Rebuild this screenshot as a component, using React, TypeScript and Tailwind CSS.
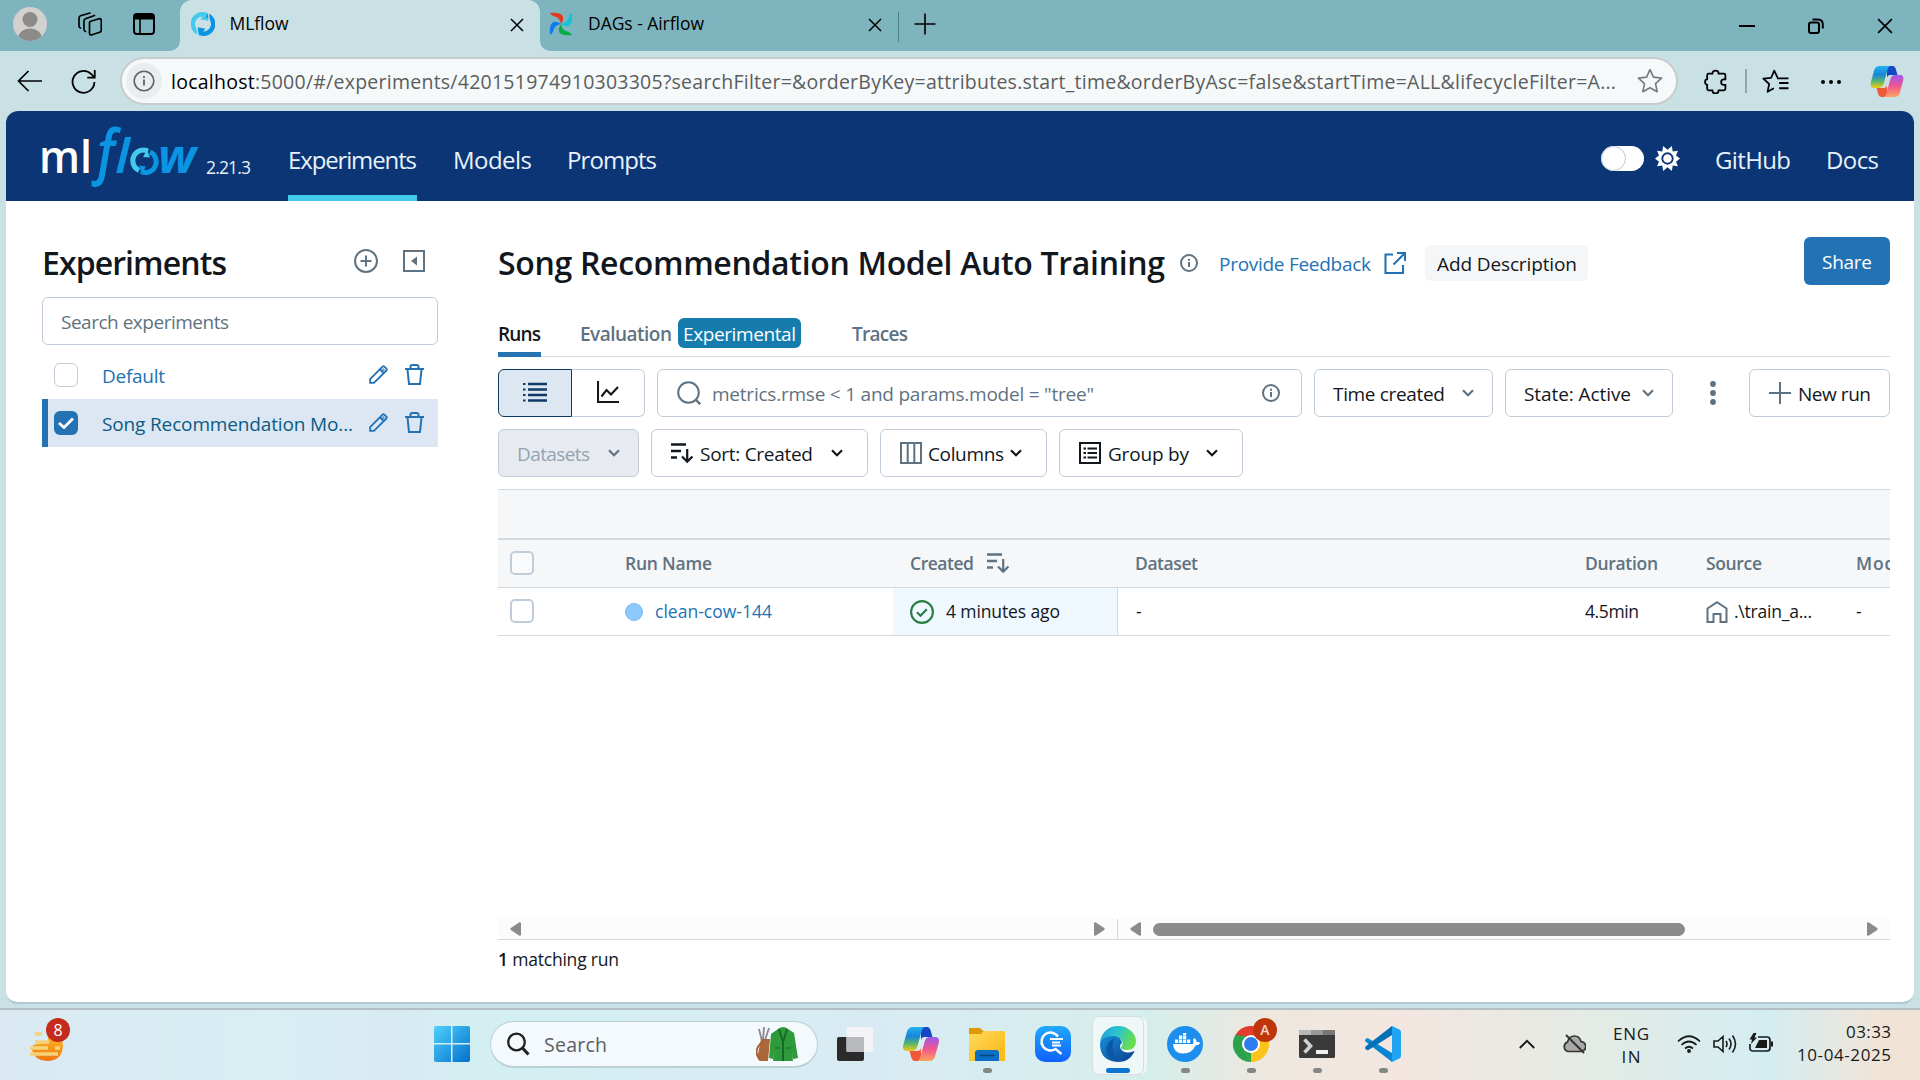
import React, { useLayoutEffect, useRef, useState } from "react";

/**
 * One line of text, tracked so that its glyphs fill the width of its box.
 * A container can set --drop to move the baselines of its texts.
 */
function T({ className = "", children }: { className?: string; children: React.ReactNode }) {
  const outer = useRef<HTMLSpanElement>(null);
  const inner = useRef<HTMLSpanElement>(null);
  const [spacing, setSpacing] = useState(0);
  useLayoutEffect(() => {
    const box = outer.current;
    const text = inner.current;
    if (!box || !text) return;
    const count = Math.max((text.textContent || "").length - 1, 1);
    const natural = text.getBoundingClientRect().width;
    setSpacing((box.clientWidth - natural) / count);
  }, []);
  return (
    <span ref={outer} className={"block shrink-0 whitespace-nowrap pt-[var(--drop,1px)] " + className}>
      <span ref={inner} className="inline-block" style={{ letterSpacing: spacing }}>
        {children}
      </span>
    </span>
  );
}

type IconProps = { className?: string; box?: string; children: React.ReactNode };

function Line({ className = "", box = "0 0 24 24", children }: IconProps) {
  return (
    <svg viewBox={box} className={"block shrink-0 " + className} fill="none" stroke="currentColor" strokeWidth="2">
      {children}
    </svg>
  );
}

const Chevron = ({ className = "" }: { className?: string }) => (
  <Line box="0 0 12 8" className={"h-2 w-3 " + className}>
    <path d="M1 1.2 6 6.2 11 1.2" strokeWidth="2.2" />
  </Line>
);

const Info = ({ className = "" }: { className?: string }) => (
  <Line box="0 0 18 18" className={"size-[18px] text-[#5f7281] " + className}>
    <circle cx="9" cy="9" r="8" />
    <path d="M9 8v5M9 4.8v2" />
  </Line>
);

const Cross = ({ className = "" }: { className?: string }) => (
  <Line box="0 0 14 14" className={className}>
    <path d="M1 1 13 13M13 1 1 13" strokeWidth="1.5" />
  </Line>
);

const SortIcon = ({ className = "" }: { className?: string }) => (
  <Line box="0 0 22 21" className={"h-[21px] w-[22px] " + className}>
    <path d="M0 1.5h15M0 8h10M0 14.5h6" strokeWidth="2.4" />
    <path d="M16.2 6v12M11 13.5l5.2 5.2 5.2-5.2" strokeWidth="2.2" />
  </Line>
);

const Cycle = ({ className = "" }: { className?: string }) => (
  <svg viewBox="0 0 24 24" className={"block shrink-0 " + className} fill="none" strokeWidth="4.4">
    <path d="M8.200 20.800A9.500 9.500 0 0 1 14.500 2.800" stroke="#43c9ed" />
    <path d="M15.500 0 17.200 8.800 9.500 7.200z" fill="#43c9ed" />
    <path d="M15.800 3.200A9.500 9.500 0 0 1 9.500 21.200" stroke="#0a94e2" />
    <path d="M8.500 24 6.800 15.200 14.500 16.800z" fill="#0a94e2" />
    <path d="M17.200 0 18.400 9.600" stroke="#c9e0e4" strokeWidth="1.200" />
    <path d="M6.800 24 5.600 14.400" stroke="#c9e0e4" strokeWidth="1.200" />
  </svg>
);

const Copilot = ({ className = "" }: { className?: string }) => (
  <svg viewBox="0 0 36 34" className={"block shrink-0 " + className}>
    <defs>
      <linearGradient id="cpA" x1="0" y1="0" x2="0" y2="1">
        <stop offset="0" stopColor="#22b3ee" />
        <stop offset=".4" stopColor="#1786d8" />
        <stop offset=".7" stopColor="#5cb568" />
        <stop offset="1" stopColor="#f2cc16" />
      </linearGradient>
      <linearGradient id="cpB" x1="0" y1="0" x2="0" y2="1">
        <stop offset="0" stopColor="#9b58ee" />
        <stop offset=".5" stopColor="#f0568f" />
        <stop offset="1" stopColor="#ffa45c" />
      </linearGradient>
    </defs>
    <path d="M18 0h6c2 0 3 1.500 3.500 3l2 7h-8c-2 0-3 1-3.500 3z" fill="#1347c4" />
    <path d="M18 34h-6c-2 0-3-1.500-3.500-3l-2-7h8c2 0 3-1 3.500-3z" fill="#f0583a" />
    <path d="M10 0h12c-2 .5-2.800 2-3.500 4.500L14.500 19c-1 3.600-2.500 5-5.500 5H4c-4 0-4.500-3-3.600-6.500L4 4.500C5 1.500 7 0 10 0z" fill="url(#cpA)" />
    <path d="M26 34H14c2-.5 2.800-2 3.500-4.500L21.500 15c1-3.600 2.500-5 5.500-5h5c4 0 4.500 3 3.600 6.500L32 29.500c-1 3-3 4.500-6 4.500z" fill="url(#cpB)" />
  </svg>
);

const Airflow = () => (
  <svg viewBox="0 0 24 24" className="size-6 shrink-0">
    <path d="M1 1c6-.6 12 0 13 4 .6 3-1 5-2 7-1-4-2-6-5-7C4 4 2 3 1 1z" fill="#e43921" />
    <path d="M23 1c.6 6 0 12-4 13-3 .6-5-1-7-2 4-1 6-2 7-5 1-3 2-5 4-6z" fill="#11c5d3" />
    <path d="M23 23c-6 .6-12 0-13-4-.6-3 1-5 2-7 1 4 2 6 5 7 3 1 5 2 6 4z" fill="#04ae46" />
    <path d="M1 23c-.6-6 0-12 4-13 3-.6 5 1 7 2-4 1-6 2-7 5-1 3-2 5-4 6z" fill="#0f7cee" />
  </svg>
);

function TitleBar() {
  return (
    <div className="flex h-[51px] shrink-0 text-[17px] text-black">
      <div className="w-[180px] bg-[#c9e0e4]">
        <div className="flex h-full items-center rounded-br-[10px] bg-[#7eb4be] pb-[3px] pl-[13px]">
          <svg viewBox="0 0 34 34" className="size-[34px]">
            <clipPath id="av"><circle cx="17" cy="17" r="17" /></clipPath>
            <circle cx="17" cy="17" r="17" fill="#d3d1cf" />
            <g clipPath="url(#av)" fill="#8d8b89">
              <circle cx="17" cy="12.500" r="7.500" />
              <ellipse cx="17" cy="32" rx="12" ry="10.500" />
            </g>
          </svg>
          <Line className="ml-[31px] size-6">
            <g strokeWidth="1.700" strokeLinejoin="round" strokeLinecap="round">
              <path d="M12 9.500 21 6.800q2.300-.5 2.300 1.700v9.500q0 1.800-1.600 2.300L14 22.800q-2.500.7-2.500-1.700V11.500q0-1.600.5-2z" />
              <path d="M7.500 19.500q-1.500-.4-1.500-2.300V9q0-1.600 1.500-2.200l9-3.300" />
              <path d="M2.500 16q-1.500-.4-1.500-2.300V6q0-1.600 1.500-2.200L12 1" />
            </g>
          </Line>
          <Line box="0 0 22 22" className="ml-[31px] size-[22px]">
            <rect x="1" y="1" width="20" height="20" rx="3" />
            <path d="M1.500 4h19" strokeWidth="5" />
            <path d="M7 6v15" strokeWidth="1.600" />
          </Line>
        </div>
      </div>
      <div className="w-[360px] bg-[#7eb4be]">
        <div className="flex h-full items-center rounded-t-[12px] bg-[#c9e0e4] pb-[3px] pl-[11px]">
          <Cycle className="size-6" />
          <T className="-mt-[2px] ml-[14.5px] w-[58.5px] text-[17.5px]">MLflow</T>
          <Cross className="ml-[222px] mt-0.5 size-[14px]" />
        </div>
      </div>
      <div className="flex-1 bg-[#c9e0e4]">
        <div className="flex h-full items-center rounded-bl-[10px] bg-[#7eb4be] pb-[3px] pl-[9px]">
          <Airflow />
          <T className="-mt-[2px] ml-[15px] w-[116px] text-[17.5px]">DAGs - Airflow</T>
          <Cross className="ml-[164px] mt-0.5 size-[14px]" />
          <span className="ml-[16px] mt-[5px] h-[30px] w-px bg-[#4d7f88]" />
          <Line box="0 0 22 22" className="ml-[15px] mt-[-1px] size-[22px]"><path d="M11 .5v21M.5 11h21" strokeWidth="1.600" /></Line>
          <Line box="0 0 16 16" className="ml-auto mt-[3px] size-4"><path d="M0 8h16" /></Line>
          <Line box="0 0 16 16" className="ml-[53px] mt-[3px] size-4">
            <rect x="1" y="4.500" width="10" height="10.500" rx="2" />
            <path d="M4.500 1.500H10q4.800 0 4.800 5v4" />
          </Line>
          <Cross className="ml-[53px] mr-[27px] mt-[3px] size-4" />
        </div>
      </div>
    </div>
  );
}

const starPath = "M12 1.500l3.200 6.900 7.500.9-5.600 5.100 1.500 7.500L12 18.200l-6.600 3.700 1.500-7.500L1.300 9.300l7.500-.9z";

function AddressBar() {
  return (
    <div className="flex h-[60px] shrink-0 items-center pl-[17px] text-black">
      <Line box="0 0 26 22" className="-mt-px h-[22px] w-[26px]"><path d="M25 11H1.500M11.500 1 1.500 11l10 10" strokeWidth="1.700" /></Line>
      <Line className="ml-[28px] size-[25px]">
        <path d="M22.500 12.500A10.500 10.500 0 1 1 19.500 5l3 3M22.800 1v7.200h-7.200" strokeWidth="1.700" />
      </Line>
      <div className="ml-[24px] flex h-[48px] w-[1558px] items-center rounded-full border-2 border-[#c9cccd] bg-[#f5f9fa] pl-[4px] text-[19.5px] text-[#5b5d5e]">
        <span className="flex size-9 items-center justify-center rounded-full bg-[#e8edee]">
          <Line box="0 0 22 22" className="size-[22px] text-[#606263]">
            <circle cx="11" cy="11" r="9.800" strokeWidth="1.600" />
            <path d="M11 9.500v6M11 6v2" strokeWidth="1.800" />
          </Line>
        </span>
        <T className="ml-[9px] w-[1445px]">
          <span className="text-black">localhost</span>
          :5000/#/experiments/420151974910303305?searchFilter=&amp;orderByKey=attributes.start_time&amp;orderByAsc=false&amp;startTime=ALL&amp;lifecycleFilter=A...
        </T>
        <Line className="ml-[21px] size-[26px] text-[#77797a]"><path d={starPath} strokeWidth="1.500" strokeLinejoin="round" /></Line>
      </div>
      <Line className="ml-[25px] size-[25px]">
        <path d="M9 4.500a3 3 0 0 1 6 0h5q1.500 0 1.500 1.500v4h-1.500a2.600 2.600 0 0 0 0 5.200h1.500V19q0 1.500-1.500 1.500h-5a3 3 0 0 1-6 0H5.500Q4 20.500 4 19v-3.800a2.800 2.800 0 0 1 0-5.400V6q0-1.500 1.500-1.500z" strokeWidth="1.700" />
      </Line>
      <span className="ml-[17px] h-6 w-[2px] bg-[#93a5a9]" />
      <Line box="0 0 26 24" className="ml-[15px] h-[25px] w-[27px]">
        <path d="M15 8.300 11.800 1.500 8.800 8.400l-7.500.9 5.600 5.100-1.500 7.500 6-3.400" strokeWidth="1.700" strokeLinejoin="round" />
        <path d="M14.500 9h11M16.500 13.500h9M16.500 18.500h9" strokeWidth="1.800" />
      </Line>
      <svg viewBox="0 0 22 6" className="ml-[31px] mt-px h-1.5 w-[22px]"><circle cx="3" cy="3" r="2" /><circle cx="11" cy="3" r="2" /><circle cx="19" cy="3" r="2" /></svg>
      <Copilot className="ml-[28px] h-[31px] w-[34px]" />
    </div>
  );
}

function NavBar() {
  return (
    <div className="flex h-[90px] shrink-0 items-center bg-[#0b3574] pl-[36px] text-[24px] text-[#e7f1fb]">
      <svg viewBox="0 -15 156 90" className="h-[90px] w-[156px] shrink-0 overflow-visible" fontFamily="Open Sans, sans-serif" fontWeight="600">
        <text fill="#0a94e2" fontStyle="italic">
          <tspan x="-3" y="47" fontSize="46" fontStyle="normal" fill="#fff" textLength="53" lengthAdjust="spacingAndGlyphs">ml</tspan>
          <tspan x="50" y="46" fontSize="64" textLength="29" lengthAdjust="spacingAndGlyphs">ƒ</tspan>
          <tspan x="73" y="47" fontSize="47" textLength="15" lengthAdjust="spacingAndGlyphs">l</tspan>
          <tspan x="116" y="47" fontSize="46" fontWeight="700" textLength="38" lengthAdjust="spacingAndGlyphs">w</tspan>
        </text>
        <g fill="none" strokeWidth="5">
          <path d="M97 44.500A10.300 10.300 0 0 1 106 25" stroke="#43c9ed" />
          <path d="M108 26A10.300 10.300 0 0 1 99 45.500" stroke="#0a94e2" />
        </g>
        <path d="M105 23.500l3 8-7-.5z" fill="#43c9ed" />
        <path d="M100 48l-3-8.500 7 1z" fill="#0a94e2" />
      </svg>
      <T className="ml-[8px] mt-[22px] w-[45px] text-[17.5px]">2.21.3</T>
      <div className="ml-[37px] flex h-full items-center border-b-[6px] border-[#43c9ed] pt-[13px]">
        <T className="w-[129px]">Experiments</T>
      </div>
      <T className="ml-[36px] mt-[7px] w-[79px]">Models</T>
      <T className="ml-[35px] mt-[7px] w-[90px]">Prompts</T>
      <span className="ml-auto mt-[4px] flex h-[25px] w-[43px] rounded-full bg-white">
        <span className="size-[25px] rounded-full border border-[#b9c8d8] bg-white" />
      </span>
      <svg viewBox="0 0 24 24" className="ml-[11px] mt-[4px] size-[25px] shrink-0">
        <path d="M12 3.500 16.200 0 17 5.300 22 4.500 20.200 9 24 12l-3.800 3 1.800 4.500-5-.8-.8 5.300L12 20.500 7.800 24 7 18.700l-5 .8L3.800 15 0 12l3.800-3L2 4.500l5 .8L7.800 0z" fill="#fff" />
        <circle cx="12" cy="12" r="5" fill="#fff" stroke="#0b3574" strokeWidth="1.800" />
      </svg>
      <T className="ml-[35px] mt-[7px] w-[76px]">GitHub</T>
      <T className="ml-[35px] mr-[35px] mt-[7px] w-[53px]">Docs</T>
    </div>
  );
}

const RowActions = () => (
  <span className="-mt-px ml-auto mr-[14px] flex items-center gap-[17px] text-[#2272b4]">
    <Line box="0 0 20 20" className="size-[19px]">
      <path d="M1.200 18.800v-4L14.200 1.700q1-.9 2 0l2.100 2.100q.9 1 0 2L5.200 18.800zM11.500 4.500l4 4" strokeWidth="1.900" />
      <circle cx="15" cy="5" r="1" strokeWidth="1" />
    </Line>
    <Line box="0 0 19 21" className="h-[21px] w-[19px]">
      <path d="M0 5h19M5.500 5V2.800Q5.500 1 7.300 1h4.400q1.800 0 1.800 1.800V5M2.500 5.500 4 20h11l1.500-14.500" />
    </Line>
  </span>
);

function Sidebar() {
  return (
    <aside className="w-[396px] shrink-0 text-[19px] [--drop:3px]">
      <div className="flex h-[96px] items-center pt-[24px]">
        <T className="w-[185px] text-[32px] font-semibold text-[#11171c]">Experiments</T>
        <Line className="ml-auto size-6 text-[#5f7281]"><circle cx="12" cy="12" r="11" /><path d="M12 6.500v11M6.500 12h11" /></Line>
        <Line box="0 0 22 22" className="ml-[25px] mr-[13px] size-[22px] text-[#5f7281]">
          <rect x="1" y="1" width="20" height="20" />
          <path d="M14 6.500v9L8 11z" fill="currentColor" stroke="none" />
        </Line>
      </div>
      <div className="flex h-12 items-center rounded-[6px] border border-[#c0cdd8] pl-[18px] text-[#5f7281]">
        <T className="w-[168px]">Search experiments</T>
      </div>
      <div className="mt-1.5 flex h-12 items-center pl-3 text-[#2272b4]">
        <span className="size-6 rounded-[6px] border border-[#c0cdd8]" />
        <T className="ml-[24px] w-[63px]">Default</T>
        <RowActions />
      </div>
      <div className="flex h-12 items-center border-l-[6px] border-[#2272b4] bg-[#dce7f3] pl-1.5">
        <span className="flex size-6 items-center justify-center rounded-[6px] bg-[#2272b4] text-white">
          <Line box="0 0 16 12" className="h-3 w-4"><path d="M1 6 6 10.500 15 1.500" strokeWidth="2.800" /></Line>
        </span>
        <T className="ml-[24px] w-[251px] text-[#0b5b85]">Song Recommendation Mo...</T>
        <RowActions />
      </div>
    </aside>
  );
}

const ctl = "flex h-12 shrink-0 items-center rounded-[6px] border border-[#c0cdd8] ";

function Toolbar() {
  return (
    <div className="text-[19px] text-[#11171c]">
      <div className="flex h-12 items-center">
        <span className="flex h-12 w-[74px] items-center justify-center rounded-l-[6px] border border-[#0e3a66] bg-[#dce7f2] text-[#0e3a66]">
          <Line box="0 0 24 20" className="-mt-0.5 h-5 w-6">
            <path d="M5 2h19M5 7.500h19M5 13h19M5 18.500h19" strokeWidth="2.300" />
            <path d="M0 2h2.500M0 7.500h2.500M0 13h2.500M0 18.500h2.500" strokeWidth="2" />
          </Line>
        </span>
        <span className="flex h-12 w-[73px] items-center justify-center rounded-r-[6px] border border-l-0 border-[#c0cdd8]">
          <Line box="0 0 22 22" className="-mt-0.5 size-[22px]"><path d="M1 0v21h21M4.500 15.500l5-6.500 4.500 4.500L21 6" strokeWidth="2.100" /></Line>
        </span>
        <div className={ctl + "ml-3 w-[645px] pl-[19px] pr-[21px] text-[#5f7281]"}>
          <Line className="size-6"><circle cx="11.500" cy="11.500" r="10.300" /><path d="M18.500 18.500l4.700 4.700" strokeWidth="2.400" /></Line>
          <T className="ml-[11px] w-[382px]">metrics.rmse &lt; 1 and params.model = "tree"</T>
          <Info className="ml-auto" />
        </div>
        <div className={ctl + "ml-3 w-[179px] pl-[18px]"}>
          <T className="w-[112px]">Time created</T>
          <Chevron className="ml-[17px] text-[#5f7281]" />
        </div>
        <div className={ctl + "ml-3 w-[168px] pl-[18px]"}>
          <T className="w-[107px]">State: Active</T>
          <Chevron className="ml-[11px] text-[#5f7281]" />
        </div>
        <svg viewBox="0 0 6 24" className="ml-[37px] h-6 w-1.5 fill-[#5f7281]"><circle cx="3" cy="3" r="2.900" /><circle cx="3" cy="12" r="2.900" /><circle cx="3" cy="21" r="2.900" /></svg>
        <div className={ctl + "ml-auto w-[141px] pl-[19px]"}>
          <Line box="0 0 22 22" className="size-[22px] text-[#5f7281]"><path d="M11 0v22M0 11h22" /></Line>
          <T className="ml-[7px] w-[73px]">New run</T>
        </div>
      </div>
      <div className="mt-3 flex h-12 items-center gap-3">
        <div className={ctl + "w-[141px] bg-[#e7ebef] pl-[18px] text-[#92a4b3]"}>
          <T className="w-[73px]">Datasets</T>
          <Chevron className="ml-[18px] text-[#5f7281]" />
        </div>
        <div className={ctl + "w-[217px] pl-[19px]"}>
          <SortIcon />
          <T className="ml-[7px] w-[113px]">Sort: Created</T>
          <Chevron className="ml-[18px]" />
        </div>
        <div className={ctl + "w-[167px] pl-[19px]"}>
          <Line box="0 0 22 22" className="size-[22px] text-[#5f7281]"><rect x="1" y="1" width="20" height="20" /><path d="M7.700 1v20M14.300 1v20" /></Line>
          <T className="ml-[6px] w-[76px]">Columns</T>
          <Chevron className="ml-[6px]" />
        </div>
        <div className={ctl + "w-[184px] pl-[19px]"}>
          <Line box="0 0 22 22" className="size-[22px]"><rect x="1" y="1" width="20" height="20" /><path d="M8.500 6.500H18M8.500 11H18M8.500 15.500H18M4.500 6.500H7M4.500 11H7M4.500 15.500H7" /></Line>
          <T className="ml-[7px] w-[81px]">Group by</T>
          <Chevron className="ml-[17px]" />
        </div>
      </div>
    </div>
  );
}

const Check = () => <span className="-mt-px size-6 shrink-0 rounded-[5px] border-2 border-[#c0cdd8] bg-white/40" />;

function RunsTable() {
  return (
    <div className="mt-3 text-[17.5px] [--drop:0px]">
      <div className="h-[51px] border-b-2 border-t border-[#d1d9e1] bg-[#f5f7f9]" />
      <div className="flex h-12 items-center overflow-hidden border-b border-[#d1d9e1] bg-[#f5f7f9] pl-[12px] font-semibold text-[#5f7281]">
        <Check />
        <T className="ml-[91px] w-[87px]">Run Name</T>
        <T className="ml-[198px] w-[64px]">Created</T>
        <SortIcon className="ml-[13px]" />
        <T className="ml-[126px] w-[63px]">Dataset</T>
        <T className="ml-[387px] w-[73px]">Duration</T>
        <T className="ml-[48px] w-[56px]">Source</T>
        <T className="ml-[94px] w-[56px]">Model</T>
      </div>
      <div className="flex h-12 items-center overflow-hidden border-b border-[#d1d9e1] pl-[12px] text-[#11171c]">
        <Check />
        <span className="ml-[91px] size-[18px] shrink-0 rounded-full border border-[#7dbaf0] bg-[#8bc9ff]" />
        <T className="ml-[12px] w-[117px] text-[#2272b4]">clean-cow-144</T>
        <div className="ml-[121px] flex h-full w-[225px] shrink-0 items-center border-r border-[#d1d9e1] bg-[#f0f8ff] pl-[17px]">
          <Line className="size-6 text-[#277c43]"><circle cx="12" cy="12" r="10.900" strokeWidth="2.100" /><path d="M7 12.200l3.500 3.500 6.300-6.500" strokeWidth="2.100" /></Line>
          <T className="ml-[12px] w-[114px]">4 minutes ago</T>
        </div>
        <T className="ml-[18px] w-[6px]">-</T>
        <T className="ml-[443px] w-[54px]">4.5min</T>
        <Line box="0 0 22 22" className="ml-[67px] size-[22px] text-[#5f7281]">
          <path d="M1.500 21V7.500L11 1.200l9.500 6.300V21h-6v-8h-7v8z" />
        </Line>
        <T className="ml-[6px] w-[78px]">.\train_a...</T>
        <T className="ml-[44px] w-[6px]">-</T>
      </div>
      <div className="h-[282px]" />
      <div className="flex h-[22px] items-center border-b border-[#d1d9e1] bg-[#fcfcfc] pt-px text-[#8b8b8b]">
        <ScrollArrow className="ml-[12px]" />
        <ScrollArrow className="ml-[573px] rotate-180" />
        <span className="ml-[12px] h-full w-px bg-[#d1d9e1]" />
        <ScrollArrow className="ml-[12px]" />
        <span className="ml-[12px] h-[13px] w-[532px] rounded-full bg-[#8b8b8b]" />
        <ScrollArrow className="ml-[182px] rotate-180" />
      </div>
      <T className="mt-[6px] w-[121px] text-[#11171c]"><b className="font-semibold">1</b> matching run</T>
    </div>
  );
}

const ScrollArrow = ({ className = "" }: { className?: string }) => (
  <svg viewBox="0 0 11 14" className={"h-[14px] w-[11px] shrink-0 " + className} fill="currentColor"><path d="M11 1v12q-.5 1-1.500.8L.8 8Q-.2 7 .8 6L9.500.2q1-.2 1.500.8z" /></svg>
);

function Main() {
  return (
    <main className="ml-[60px] w-[1392px] text-[19px] [--drop:3px]">
      <div className="flex h-[84px] items-center pt-[36px]">
        <T className="mt-px w-[667px] text-[32px] font-semibold text-[#11171c]">Song Recommendation Model Auto Training</T>
        <Info className="ml-[15px] mt-[4px]" />
        <T className="ml-[21px] mt-[3px] w-[152px] text-[#2272b4]">Provide Feedback</T>
        <Line box="0 0 22 22" className="ml-[13px] mt-[3px] size-[22px] text-[#2272b4]">
          <path d="M9 2.500H1.500V21H19v-8M13 1h8v8M20.500 1.500 9.500 12.500" strokeWidth="2.100" />
        </Line>
        <span className="ml-[19px] mt-[4px] flex h-9 items-center rounded-[6px] bg-[#f5f6f8] pl-[12px] pr-[11px] text-[#11171c]"><T className="w-[140px]">Add Description</T></span>
        <span className="ml-auto flex h-12 w-[86px] items-center justify-center rounded-[6px] bg-[#2272b4] text-white"><T className="w-[50px]">Share</T></span>
      </div>
      <div className="mb-3 flex h-[72px] items-end border-b border-[#d1d9e1] font-semibold text-[#5f7281]">
        <div className="mb-[-1px] flex h-[46px] items-center border-b-[5px] border-[#2272b4] pt-[2px] text-[#11171c]"><T className="w-[43px]">Runs</T></div>
        <T className="mb-[8px] ml-[39px] w-[92px]">Evaluation</T>
        <span className="mb-[8px] ml-[6px] flex h-[30px] items-center rounded-[6px] bg-[#157cad] px-[5px] font-normal text-white"><T className="w-[113px]">Experimental</T></span>
        <T className="mb-[8px] ml-[51px] w-[56px]">Traces</T>
      </div>
      <Toolbar />
      <RunsTable />
    </main>
  );
}

function TaskbarApp({ indicator = false, className = "", children }: { indicator?: boolean; className?: string; children: React.ReactNode }) {
  return (
    <span className={"flex w-[66px] flex-col items-center " + className}>
      <span className="relative flex size-9 items-center justify-center">{children}</span>
      {indicator && <span className="mt-1.5 h-[5px] w-[9px] rounded-full bg-[#858785]" />}
    </span>
  );
}

function Taskbar() {
  return (
    <div className="flex h-[72px] shrink-0 items-start border-t-2 border-[#b3bfc2] bg-[linear-gradient(90deg,#dae9f2_0%,#d8eff4_14%,#d9eaf2_20%,#d3eff2_25%,#d8ebf3_45%,#d6eeeb_60%,#eee8df_66%,#f3e6e0_73%,#e4ebe5_83%,#d4edf2_92%,#f1e4d7_98%)]">
      <span className="relative ml-[29px] mt-[22px] block h-[30px] w-[36px]">
        <svg viewBox="0 0 36 30" className="h-[30px] w-[36px]">
          <defs><linearGradient id="sun" x1="0" y1="0" x2="0" y2="1"><stop offset="0" stopColor="#fbbf24" /><stop offset="1" stopColor="#ee7512" /></linearGradient></defs>
          <path d="M19 2q14-1 15 11-.5 16-16 16Q6 29 3 18l1-5 15-3z" fill="url(#sun)" />
          <path d="M6 2h7M6 10h14M1 16h18M26 16h5M1 22h28" stroke="#f6d27a" strokeWidth="3.500" />
        </svg>
        <span className="absolute left-[17px] top-[-14px] flex size-6 items-center justify-center rounded-full bg-[#c42b1c] text-[16px] leading-none text-white">8</span>
      </span>
      <svg viewBox="0 0 36 36" className="ml-[369px] mt-[16px] size-9 shrink-0">
        <defs><linearGradient id="win" x1="0" y1="0" x2="1" y2="1"><stop offset="0" stopColor="#4fd0fb" /><stop offset="1" stopColor="#0470cd" /></linearGradient></defs>
        <path d="M2 0h15v17H0V2q0-2 2-2zM18.500 0H34q2 0 2 2v15H18.500zM0 18.500h17V36H2q-2 0-2-2zM18.500 18.500H36V34q0 2-2 2H18.500z" fill="url(#win)" />
      </svg>
      <div className="ml-[20px] mt-[11px] flex h-[47px] w-[328px] items-center rounded-full border border-b-2 border-[#b9d0d5] bg-[#f3f9fc] pl-[15px] text-[19.5px] text-[#5b6063]">
        <Line className="size-6 text-[#1d1f20]"><circle cx="10.500" cy="10" r="8.300" strokeWidth="2.300" /><path d="M16.500 16l6 6.500" strokeWidth="3" /></Line>
        <T className="ml-[14px] w-[63px]">Search</T>
        <svg viewBox="0 0 42 36" className="ml-auto mr-[19px] h-[36px] w-[42px]">
          <path d="M3 3l3 12M8 1l-1 13M13 2l-4 12" stroke="#8d8593" strokeWidth="1.800" fill="none" />
          <path d="M5 13h9l-2 22H4Q1 34 2 28z" fill="#a9673a" />
          <path d="M5 17Q-2 24 2 31l3 3" stroke="#a65c2c" strokeWidth="1.800" fill="none" />
          <path d="M22 3q5-4 10 0l6 4 4 25-5 1-1-8 1 10H17l1-10-1 8-4-1 2-24z" fill="#2f9a3c" />
          <path d="M23 3l4 13 4-13M27 16v19" stroke="#156b24" strokeWidth="2" fill="none" />
          <path d="M19 22h5M30 22h5" stroke="#1d7a2b" strokeWidth="1.500" />
        </svg>
      </div>
      <div className="ml-[4px] mt-[16px] flex">
        <TaskbarApp>
          <svg viewBox="0 0 36 36" className="size-9">
            <rect x="0" y="11" width="27" height="24" rx="2" fill="#2b2b2b" />
            <rect x="9.500" y="1" width="26.500" height="25" rx="2" fill="#f4f4f6" />
            <path d="M9.500 11H27v15H9.500z" fill="#b8b9bc" />
          </svg>
        </TaskbarApp>
        <TaskbarApp><Copilot className="h-[34px] w-9" /></TaskbarApp>
        <TaskbarApp indicator>
          <svg viewBox="0 0 36 36" className="size-9">
            <defs><linearGradient id="fold" x1="0" y1="0" x2="1" y2="1"><stop offset="0" stopColor="#ffd95e" /><stop offset="1" stopColor="#fbb70f" /></linearGradient></defs>
            <path d="M0 3q0-1 1-1h10l4 3.500V10H0z" fill="#dd9a06" />
            <path d="M0 8h12l3-3h20q1 0 1 1v28q0 1-1 1H1q-1 0-1-1z" fill="url(#fold)" />
            <path d="M6 35V27q0-3 3-3h18q3 0 3 3v8z" fill="#0a6fc4" />
            <path d="M10.500 29.500h15" stroke="#06457f" strokeWidth="1.600" />
          </svg>
        </TaskbarApp>
        <TaskbarApp>
          <svg viewBox="0 0 36 36" className="size-9" fill="none" stroke="#fff">
            <defs><linearGradient id="itop" x1="0" y1="0" x2="0" y2="1"><stop offset="0" stopColor="#22a9fb" /><stop offset="1" stopColor="#0e62fb" /></linearGradient></defs>
            <rect width="36" height="36" rx="10" fill="url(#itop)" stroke="none" />
            <path d="M23 10.500A9 9 0 1 0 20.500 23l6 5" strokeWidth="2.500" />
            <path d="M15 13h13M17 16.500h8M17 19.500h9" strokeWidth="1.800" />
          </svg>
        </TaskbarApp>
        <span className="mt-[-10px] flex w-[66px] justify-center">
          <span className="-ml-0.5 flex h-[59px] w-[52px] flex-col items-center rounded-[7px] border border-[#d3dfe0] bg-white/60 pt-[9px] shadow-[4px_0_0_-1px_#ffffff90]">
            <svg viewBox="0 0 36 36" className="size-9 shrink-0">
              <defs>
                <linearGradient id="edA" x1="0" y1="0" x2="1" y2=".4"><stop offset="0" stopColor="#1a9bdc" /><stop offset=".5" stopColor="#2cc3cf" /><stop offset="1" stopColor="#67dd4f" /></linearGradient>
                <linearGradient id="edB" x1="0" y1="0" x2="1" y2="1"><stop offset="0" stopColor="#1590dd" /><stop offset="1" stopColor="#0b3f8c" /></linearGradient>
              </defs>
              <path d="M0 18C1 10 7 8 13 9q8 1 9 8-3 2-1.500 5.500Q23 27 29 26.500q3-.3 5-1.500.8 0 0 1.500Q29 36 18 36 0 35 0 18z" fill="url(#edB)" />
              <path d="M0 17C1 6 9 0 18 0c11 0 18 8 18 15 0 6-4 9-9 9-4 0-7-1.500-5.500-3.500 3.500-4.500-1-10.500-8.500-10.500-7 0-12 3-13 7z" fill="url(#edA)" />
              <path d="M13 17q-2 8 3 13.500 3 3.500 7 4-7 2-13-3-6-6-2-14 2-4 7-5-2 2-2 4.500z" fill="#0d57a8" />
            </svg>
            <span className="mt-1.5 h-[5px] w-6 rounded-full bg-[#0a74d1]" />
          </span>
        </span>
        <TaskbarApp indicator>
          <svg viewBox="0 0 36 36" className="size-9">
            <circle cx="18" cy="18" r="18" fill="#1d8eee" />
            <path d="M6 18h20q1-3 0-4.500l1.500-1.500q2 1.500 2.200 4 2-.3 3.800.8-1.500 2.700-5 2.700Q25 27.500 16 27.500 6.500 27.500 6 18z" fill="#fff" />
            <path d="M8 13.500h3.200V17H8zM12 13.500h3.200V17H12zM16 13.500h3.200V17H16zM20 13.500h3.200V17H20zM12 9.500h3.200V13H12zM16 9.500h3.200V13H16zM16 7h3.200v2H16z" fill="#fff" />
          </svg>
        </TaskbarApp>
        <TaskbarApp indicator>
          <svg viewBox="0 0 36 36" className="size-9">
            <path d="M18 18 2.400 9A18 18 0 0 1 33.600 9z" fill="#e33b2e" />
            <path d="M18 18 18 36A18 18 0 0 1 2.400 9z" fill="#2ba24c" />
            <path d="M18 18 33.600 9A18 18 0 0 1 18 36z" fill="#fcc31b" />
            <path d="M18 9h15.600L18 18z" fill="#e33b2e" />
            <path d="M10.200 22.500 18 36l7.800-13.500z" fill="#fcc31b" />
            <path d="M10.200 22.500 2.400 9 12 10v14l6 3v9z" fill="#2ba24c" />
            <circle cx="18" cy="18" r="9" fill="#fff" /><circle cx="18" cy="18" r="7" fill="#2f7cf0" />
          </svg>
          <span className="absolute left-[20px] top-[-8px] flex size-6 items-center justify-center rounded-full bg-[#bf360c] text-[14px] font-semibold leading-none text-[#f3d5c9]">A</span>
        </TaskbarApp>
        <TaskbarApp indicator>
          <svg viewBox="0 0 36 28" className="h-[28px] w-9">
            <rect width="36" height="28" rx="1.500" fill="#3a3a3a" />
            <path d="M0 1.500Q0 0 1.500 0H12v5H0z" fill="#b9b9b9" /><path d="M12 0h12v5H12z" fill="#999" /><path d="M24 0h10.500Q36 0 36 1.500V5H24z" fill="#777" />
            <path d="M5.500 9.500 11.500 16l-6 6.500" stroke="#d2d2d2" strokeWidth="3.600" fill="none" />
            <rect x="17" y="20" width="12" height="4" fill="#f0f0f0" />
          </svg>
        </TaskbarApp>
        <TaskbarApp indicator>
          <svg viewBox="0 0 36 36" className="size-9">
            <path d="M3.500 12.500Q1.500 11.500.3 13.500q-.6 1.300.5 2.300L27 36v-9z" fill="#0a86d2" />
            <path d="M.3 22.500q1.200 2.500 3.200 1.500L27 9V0L.8 20.200q-1 1-.5 2.300z" fill="#0470b8" />
            <path d="M27 0 34.500 3.500Q36 4.200 36 6v24q0 1.800-1.500 2.500L27 36z" fill="#22a5f1" />
          </svg>
        </TaskbarApp>
      </div>
      <div className="ml-auto mr-[29px] flex h-[68px] items-center text-[17px] leading-[23px] text-[#191b1b]">
        <Line box="0 0 16 10" className="h-[10px] w-4"><path d="M.8 9 8 1.800 15.200 9" strokeWidth="1.900" /></Line>
        <Line box="0 0 24 20" className="ml-[27px] h-5 w-6 text-[#333]">
          <path d="M6 17.500a5 5 0 0 1-.5-9.500Q7 2 12.500 2q5 0 6.500 5.500a5 5 0 0 1-.5 10z" fill="#aaa9a8" strokeWidth="1.700" />
          <path d="M4 1l18 18" strokeWidth="2" />
        </Line>
        <span className="mt-px ml-[27px] flex flex-col items-center [--drop:0px]">
          <T className="w-[36px]">ENG</T>
          <T className="w-[19px]">IN</T>
        </span>
        <Line box="0 0 24 18" className="ml-[28px] h-[18px] w-6">
          <path d="M1 6.500Q12-4 23 6.500M4.500 10Q12 3 19.500 10M8 13.500q4-3.500 8 0" strokeWidth="1.700" />
          <circle cx="12" cy="16" r="1.900" fill="currentColor" stroke="none" />
        </Line>
        <Line box="0 0 24 20" className="ml-[12px] h-5 w-6">
          <path d="M1 7h4l5-4.500v15L5 13H1zM13 7q2 3 0 6M16 4.500q4 5.500 0 11M19.500 1.500q6 8.500 0 17" strokeWidth="1.600" />
        </Line>
        <Line box="0 0 24 20" className="-mt-[3px] ml-[12px] h-5 w-6">
          <path d="M9 4h9q3 0 3 3v8q0 3-3 3H4q-3 0-3-3v-4" strokeWidth="1.700" />
          <path d="M6 15l4-8h8v8zM22 8.500h2v5h-2zM4.500 0 .5 6.500H3L2 11l6-6.500H5.500L7.500 0z" fill="currentColor" stroke="none" />
        </Line>
        <span className="-mt-[2px] ml-[24px] flex flex-col items-end [--drop:0px]">
          <T className="w-[45px]">03:33</T>
          <T className="w-[94px]">10-04-2025</T>
        </span>
      </div>
    </div>
  );
}

export default function App() {
  return (
    <div className="flex h-[1080px] w-[1920px] flex-col overflow-hidden bg-[#c9e0e4] font-['Open_Sans','Noto_Sans',sans-serif]">
      <TitleBar />
      <AddressBar />
      <div className="mx-1.5 mb-1 flex h-[893px] shrink-0 flex-col overflow-hidden rounded-[12px] border-b-2 border-[#aecbd0] bg-white">
        <NavBar />
        <div className="flex pl-[36px]">
          <Sidebar />
          <Main />
        </div>
      </div>
      <Taskbar />
    </div>
  );
}
